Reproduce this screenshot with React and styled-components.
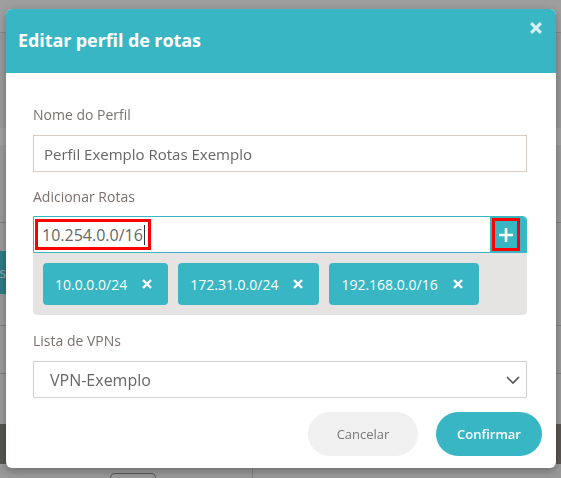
import styled, { createGlobalStyle } from "styled-components";

const teal = "#38b6c4";

const GlobalStyle = createGlobalStyle`
  html, body {
    margin: 0;
    padding: 0;
    height: 100%;
    overflow: hidden;
    font-family: "Open Sans", "Liberation Sans", sans-serif;
  }
`;

/* page behind the overlay */
const Page = styled.div`
  width: 561px;
  height: 478px;
  background: #f3f3f3;
  display: flex;
  flex-direction: column;
`;

const TopBar = styled.div`
  height: 32px;
  background: #fbfbfb;
  border-bottom: 1px solid #d8d8d8;
`;

const Block = styled.div`
  height: ${(p) => p.h}px;
  background: ${(p) => p.bg || "transparent"};
  border-bottom: ${(p) => (p.line ? "1px solid #c9c9c9" : "none")};
  display: flex;
`;

const GhostButton = styled.div`
  margin-left: -40px;
  margin-top: 28px;
  width: 46px;
  height: 43px;
  background: #47c5d1;
  color: #fff;
  font-size: 14px;
  display: flex;
  align-items: center;
  justify-content: flex-end;
  padding-right: 2px;
  border-radius: 3px;
`;

const BottomRow = styled.div`
  flex: 1;
  display: flex;
  align-items: flex-end;
`;

const PillOutline = styled.div`
  margin-left: 110px;
  width: 44px;
  height: 4px;
  border: 1px solid #8a8a8a;
  border-bottom: none;
  border-radius: 10px 10px 0 0;
`;

const Divider = styled.div`
  margin-left: 96px;
  width: 1px;
  height: 12px;
  background: #d0d0d0;
`;

const Overlay = styled.div`
  position: fixed;
  inset: 0;
  background: rgba(0, 0, 0, 0.37);
`;

/* modal */
const Modal = styled.div`
  position: fixed;
  top: 9px;
  left: 6px;
  width: 550px;
  height: 459px;
  background: #fff;
  border-radius: 6px;
  box-shadow: 0 3px 10px rgba(0, 0, 0, 0.3);
  overflow: hidden;
  display: flex;
  flex-direction: column;
`;

const Header = styled.div`
  height: 64px;
  background: ${teal};
  display: flex;
  align-items: center;
  justify-content: space-between;
  padding: 0 14px 0 12px;
  flex-shrink: 0;
`;

const Title = styled.h2`
  margin: 0 0 2px 0;
  font-size: 18px;
  font-weight: 700;
  color: #fff;
  letter-spacing: -0.1px;
`;

const CloseButton = styled.button`
  align-self: flex-start;
  margin-top: 13px;
  background: none;
  border: none;
  padding: 0;
  width: 12px;
  height: 12px;
  display: flex;
  cursor: pointer;
`;

const Body = styled.div`
  padding: 32px 29px 0 27px;
  display: flex;
  flex-direction: column;
`;

const Field = styled.div`
  display: flex;
  flex-direction: column;
  margin-bottom: ${(p) => p.mb ?? 15}px;
`;

const Label = styled.label`
  font-size: 14px;
  line-height: 20px;
  color: #7b716c;
  margin-bottom: ${(p) => p.mb ?? 10}px;
`;

const TextBox = styled.div`
  height: 37px;
  box-sizing: border-box;
  border: 1px solid ${(p) => p.border || "#d6cbc1"};
  display: flex;
  align-items: center;
  padding-left: ${(p) => p.pl ?? 10}px;
  padding-right: 10px;
  font-size: ${(p) => p.size || 15}px;
  color: #666;
  background: #fff;
`;

const Group = styled.div`
  display: flex;
  height: 37px;
  border: 1px solid ${teal};
  box-sizing: border-box;
  border-radius: 0 4px 0 0;
  overflow: hidden;
`;

const GroupInput = styled.div`
  flex: 1;
  background: #fff;
  display: flex;
  align-items: center;
  padding-left: 1px;
`;

const Highlight = styled.span`
  display: flex;
  align-items: center;
  height: 31px;
  box-sizing: border-box;
  border: 3px solid #f00;
  padding: 0 3px 0 4px;
  font-size: 16px;
  color: #666;
`;

const Caret = styled.span`
  display: inline-block;
  width: 1px;
  height: 20px;
  background: #333;
  margin-left: 1px;
`;

const AddButton = styled.button`
  width: 36px;
  background: ${teal};
  border: none;
  padding: 0 4px 0 2px;
  display: flex;
  align-items: center;
  cursor: pointer;
`;

const AddMark = styled.span`
  width: 28px;
  height: 33px;
  box-sizing: border-box;
  border: 3px solid #f00;
  display: flex;
  align-items: center;
  justify-content: center;
`;

const ChipTray = styled.div`
  background: #e5e4e2;
  padding: 10px;
  display: flex;
  gap: 10px;
  border-radius: 0 0 4px 4px;
`;

const Chip = styled.span`
  height: 42px;
  background: ${teal};
  border-radius: 4px;
  display: flex;
  align-items: center;
  gap: 15px;
  padding: 0 16px 0 12px;
  color: #fff;
  font-size: 14px;
`;

const Select = styled(TextBox)`
  justify-content: space-between;
  border-color: #d2d2d2;
  padding-right: 6px;
`;

const Footer = styled.div`
  display: flex;
  justify-content: flex-end;
  gap: 18px;
  padding: 0 14px 0 0;
  margin-top: -1px;
`;

const PillButton = styled.button`
  height: 44px;
  border: none;
  border-radius: 22px;
  font-family: inherit;
  font-size: 13px;
  cursor: pointer;
  width: ${(p) => p.w}px;
  background: ${(p) => (p.primary ? teal : "#f0f0f0")};
  color: ${(p) => (p.primary ? "#fff" : "#777")};
  font-weight: ${(p) => (p.primary ? 600 : 400)};
`;

const Cross = ({ size = 10, color = "#fff", width = 2.4 }) => (
  <svg width={size} height={size} viewBox="0 0 10 10">
    <path d="M1 1 L9 9 M9 1 L1 9" stroke={color} strokeWidth={width} strokeLinecap="butt" />
  </svg>
);

const routes = ["10.0.0.0/24", "172.31.0.0/24", "192.168.0.0/16"];

export default function App() {
  return (
    <>
      <GlobalStyle />
      <Page>
        <TopBar />
        <Block h={95} />
        <Block h={17} bg="#fff" />
        <Block h={77} line />
        <Block h={102} line>
          <GhostButton>as</GhostButton>
        </Block>
        <Block h={47} line />
        <Block h={50} />
        <Block h={40} bg="#8e877e" />
        <BottomRow>
          <PillOutline />
          <Divider />
        </BottomRow>
      </Page>
      <Overlay />
      <Modal>
        <Header>
          <Title>Editar perfil de rotas</Title>
          <CloseButton aria-label="Fechar">
            <Cross size={12} color="rgba(255,255,255,0.8)" width={2.6} />
          </CloseButton>
        </Header>
        <Body>
          <Field>
            <Label>Nome do Perfil</Label>
            <TextBox>Perfil Exemplo Rotas Exemplo</TextBox>
          </Field>
          <Field mb={16}>
            <Label mb={9}>Adicionar Rotas</Label>
            <Group>
              <GroupInput>
                <Highlight>
                  10.254.0.0/16
                  <Caret />
                </Highlight>
              </GroupInput>
              <AddButton aria-label="Adicionar">
                <AddMark>
                  <svg width="16" height="16" viewBox="0 0 16 16">
                    <path d="M8 1 V15 M1 8 H15" stroke="#fff" strokeWidth="2.6" />
                  </svg>
                </AddMark>
              </AddButton>
            </Group>
            <ChipTray>
              {routes.map((r) => (
                <Chip key={r}>
                  {r}
                  <Cross size={10} />
                </Chip>
              ))}
            </ChipTray>
          </Field>
          <Field>
            <Label>Lista de VPNs</Label>
            <Select pl={16} size={16}>
              VPN-Exemplo
              <svg width="14" height="8" viewBox="0 0 14 8">
                <path d="M1 1 L7 7 L13 1" fill="none" stroke="#555" strokeWidth="1.6" />
              </svg>
            </Select>
          </Field>
        </Body>
        <Footer>
          <PillButton w={110}>Cancelar</PillButton>
          <PillButton primary w={106}>
            Confirmar
          </PillButton>
        </Footer>
      </Modal>
    </>
  );
}
